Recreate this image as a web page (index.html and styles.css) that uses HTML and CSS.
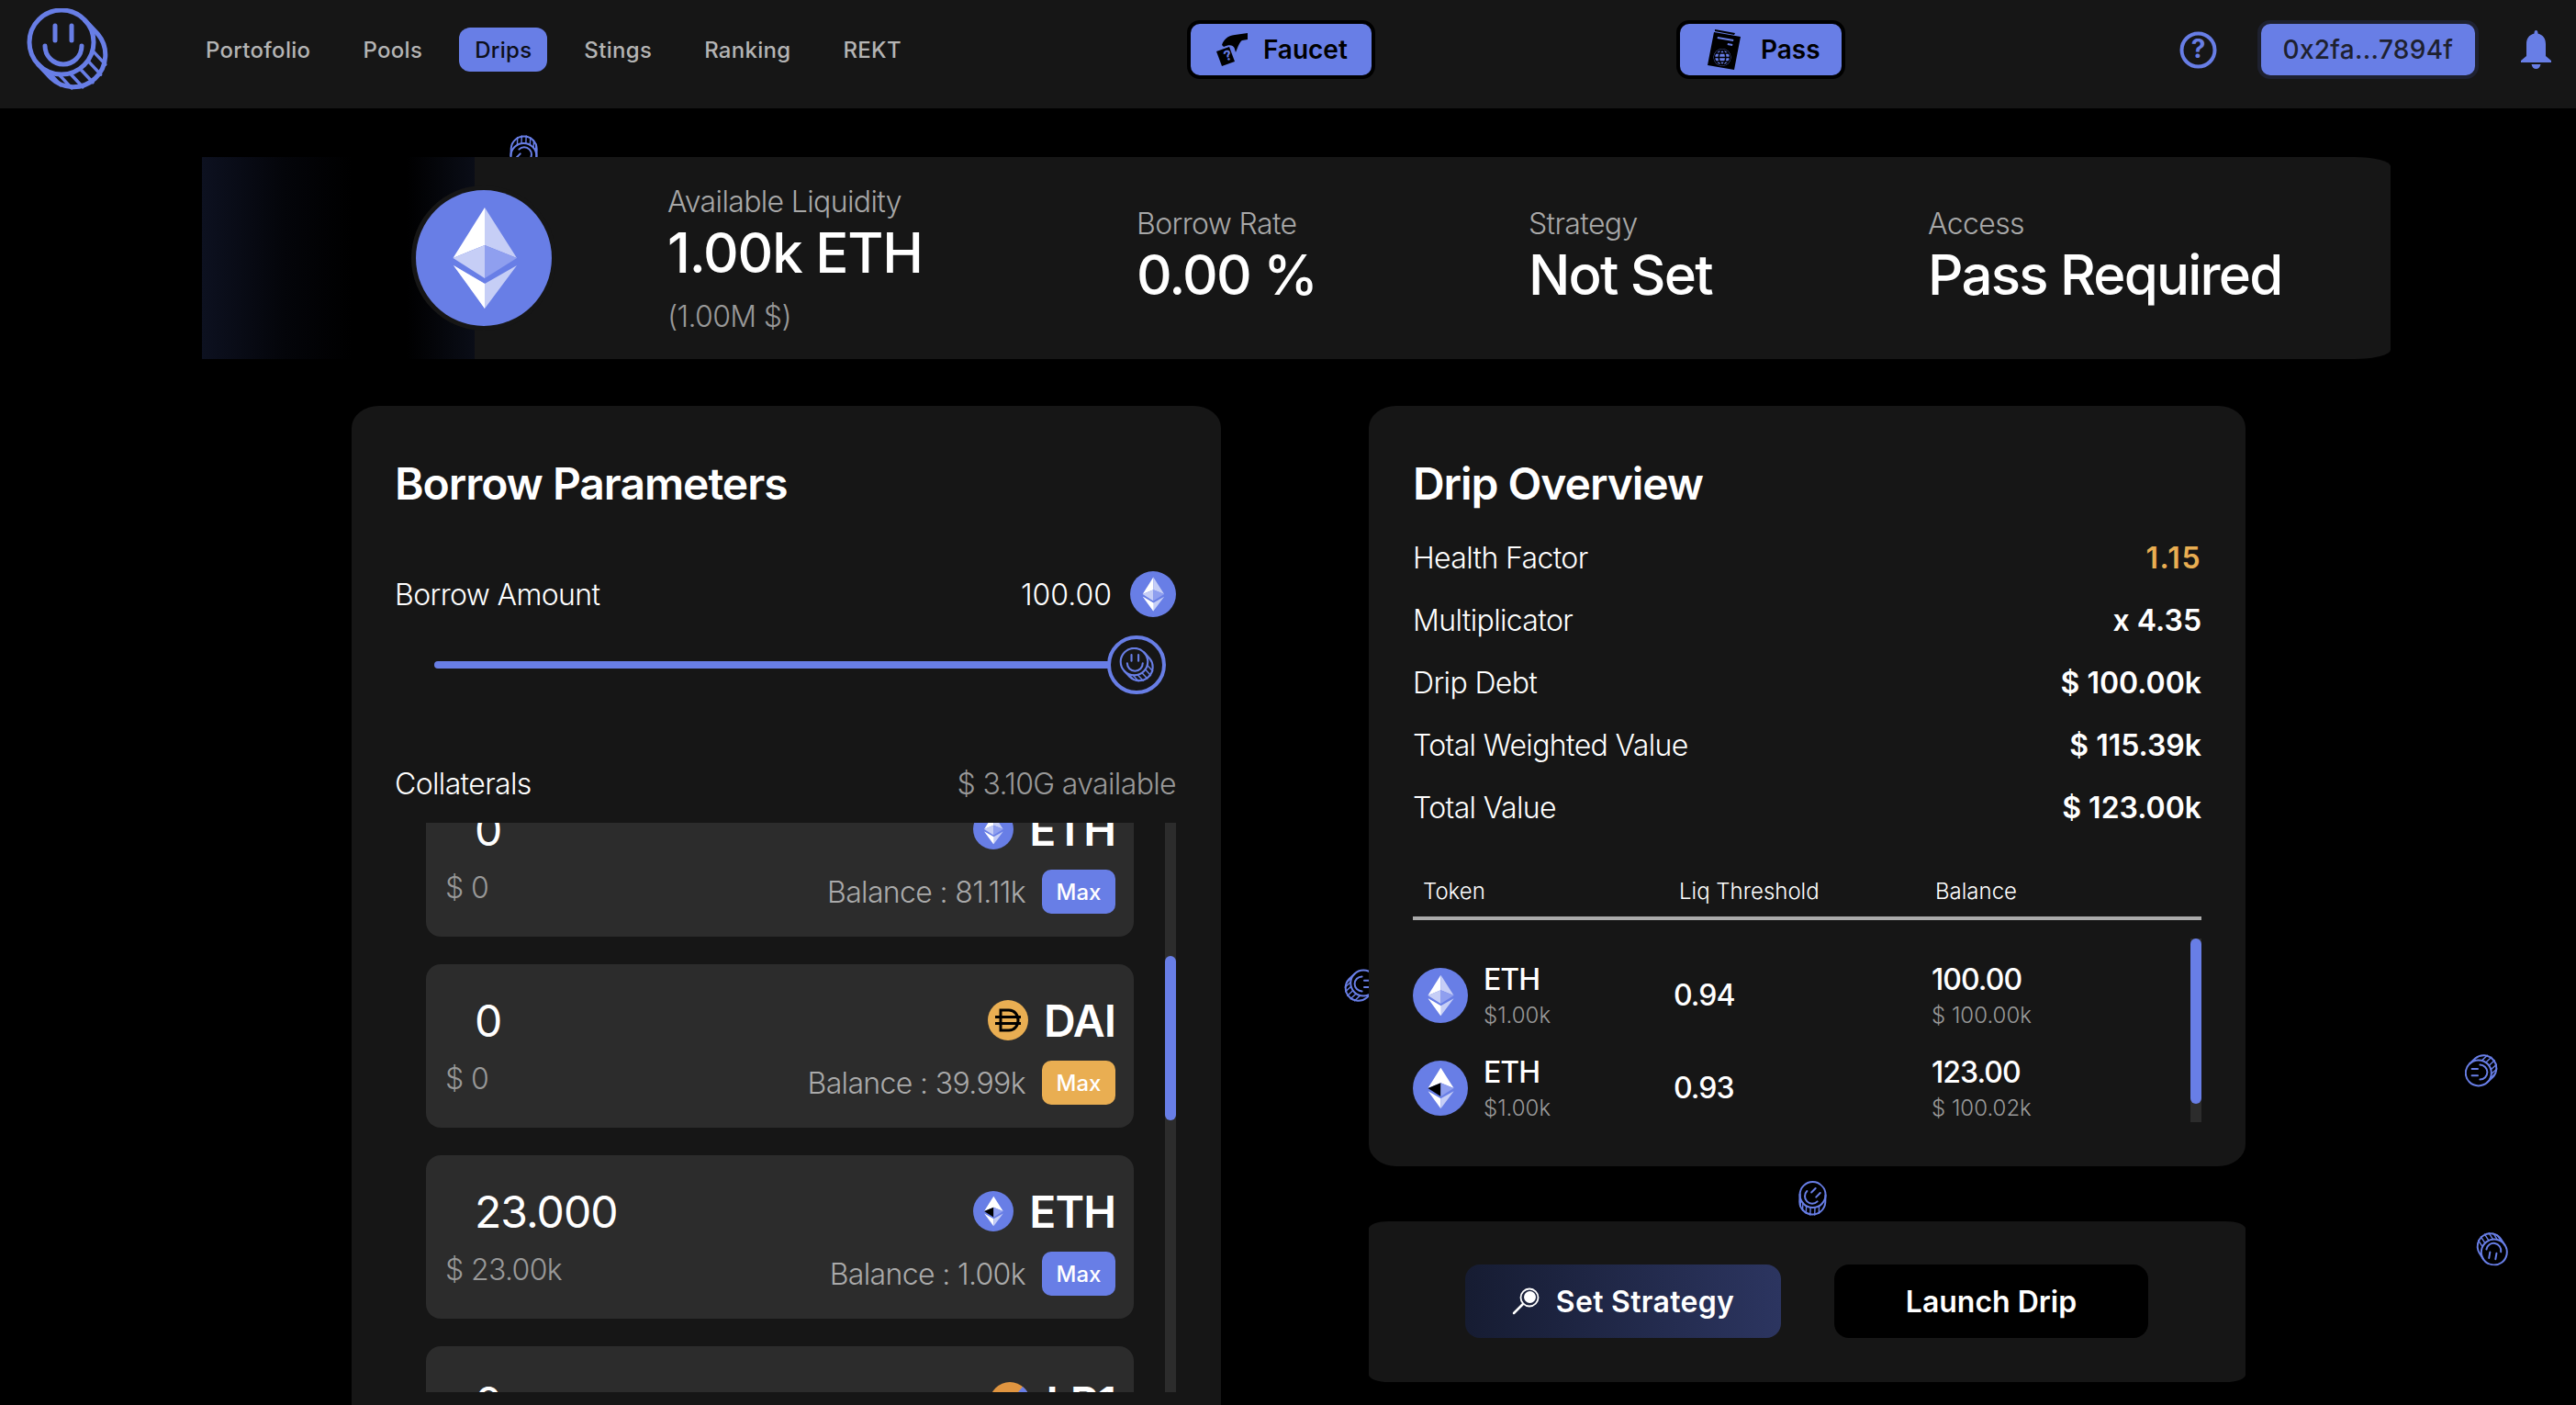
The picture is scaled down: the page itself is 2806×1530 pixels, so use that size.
FILE: index.html
```html
<!DOCTYPE html>
<html lang="en">
<head>
<meta charset="UTF-8">
<title>Drips</title>
<link rel="stylesheet" href="styles.css">
</head>
<body>

<svg class="defs" width="0" height="0">
  <symbol id="coin" viewBox="0 0 90 90">
    <g fill="none" stroke="currentColor" stroke-width="5" stroke-linecap="round">
      <circle cx="39" cy="37" r="35"/>
      <path d="M64.6 13.2L78.6 28.2A35 35 0 0 1 27.4 75.8L13.4 60.8"/>
      <path d="M32 19V35M50 19V35M21 41A20 20 0 0 0 61 41"/>
      <path stroke-width="3.5" d="M72.8 46.1L86.8 61.1M67.7 57.1L81.7 72.1M59.1 65.7L73.1 80.7M48.1 70.8L62.1 85.8M36 71.9L50 86.9M24.2 68.7L38.2 83.7"/>
    </g>
  </symbol>
  <symbol id="eth" viewBox="0 0 148 148">
    <circle cx="74" cy="74" r="74" fill="#687ee6"/>
    <path fill="#fff" d="M75 19L40.500 74L75 60Z"/>
    <path fill="#c6cef6" d="M75 19L110 74L75 60ZM40.500 74L75 60V96ZM41 82L75 129V102ZM110 82L75 129V102Z"/>
    <path fill="#8f9fef" d="M110 74L75 60V96Z"/>
    <path fill="#fff" d="M41 82L75 129V102Z"/>
  </symbol>
  <symbol id="eth-dark" viewBox="0 0 148 148">
    <circle cx="74" cy="74" r="74" fill="#687ee6"/>
    <path fill="#fff" d="M75 19L40.500 74L75 60ZM75 19L110 74L75 60Z"/>
    <path fill="#000" d="M40.500 74L75 60V96Z"/>
    <path fill="#8f9fef" d="M110 74L75 60V96Z"/>
    <path fill="#fff" d="M41 82L75 129V102Z"/>
    <path fill="#c6cef6" d="M110 82L75 129V102Z"/>
  </symbol>
</svg>

<svg class="coin coin-a"><use href="#coin"/></svg>
<svg class="coin coin-b"><use href="#coin"/></svg>
<svg class="coin coin-c"><use href="#coin"/></svg>
<svg class="coin coin-d"><use href="#coin"/></svg>
<svg class="coin coin-e"><use href="#coin"/></svg>

<header class="topbar">
  <svg class="logo"><use href="#coin"/></svg>
  <nav class="links">
    <a>Portofolio</a>
    <a>Pools</a>
    <a class="active">Drips</a>
    <a>Stings</a>
    <a>Ranking</a>
    <a>REKT</a>
  </nav>
  <button class="top-btn faucet">
    <svg width="34" height="36" viewBox="0 0 34 36">
      <path d="M34 0V7L28 8C25 10 24 14 21 21L19.500 16C18 13 14 12 8 15L6 13C8 7 12 3 20 2Z"/>
      <path d="M0 20L14 15L20 31L6 36Z"/>
      <text class="ticket-mark" x="9" y="31" transform="rotate(-20 9 27)">?</text>
    </svg>
    Faucet
  </button>
  <button class="top-btn pass">
    <svg width="36" height="44" viewBox="0 0 36 44">
      <path d="M8 0L30 4L29 6L8 2Z"/>
      <path fill-rule="evenodd" d="M7 3L36 8L29 44L0 39ZM11 8L10.6 10L28 13L28.4 11ZM22 15L21.6 17L27 18L27.4 16ZM16 21A9.500 9.500 0 1 0 16 40A9.500 9.500 0 1 0 16 21Z"/>
      <path fill="none" stroke="#000" stroke-width="1.500" d="M16 22A8.500 8.500 0 1 0 16 39A8.500 8.500 0 1 0 16 22ZM16 22C11 27 11 34 16 39C21 34 21 27 16 22ZM7.500 30.500H24.500M9 26H23M9 35H23"/>
    </svg>
    Pass
  </button>
  <svg class="help" width="41" height="41" viewBox="0 0 41 41">
    <circle cx="20.500" cy="20.500" r="18" fill="none" stroke="#687ee6" stroke-width="4"/>
    <text x="20.500" y="29" text-anchor="middle">?</text>
  </svg>
  <button class="wallet">0x2fa...7894f</button>
  <svg class="bell" width="33" height="42" viewBox="0 0 33 42">
    <path fill="#687ee6" d="M16.500 0C18 0 18.500 1.500 18.500 3.500C24.500 5 27 9.500 27 15V28L33 33V35H0V33L6 28V15C6 9.500 8.500 5 14.500 3.500C14.500 1.500 15 0 16.500 0ZM11.500 37H21.500C21 40 19 42 16.500 42C14 42 12 40 11.500 37Z"/>
  </svg>
</header>

<section class="hero">
  <div class="hero-coin"><svg><use href="#eth"/></svg></div>
  <div class="stat stat-main">
    <div class="stat-label">Available Liquidity</div>
    <div class="stat-value">1.00k ETH</div>
    <div class="stat-sub">(1.00M $)</div>
  </div>
  <div class="stat">
    <div class="stat-label">Borrow Rate</div>
    <div class="stat-value">0.00 %</div>
  </div>
  <div class="stat">
    <div class="stat-label">Strategy</div>
    <div class="stat-value">Not Set</div>
  </div>
  <div class="stat">
    <div class="stat-label">Access</div>
    <div class="stat-value">Pass Required</div>
  </div>
</section>

<main class="columns">
  <section class="card borrow">
    <h2>Borrow Parameters</h2>
    <div class="amount-row">
      <span class="tight">Borrow Amount</span>
      <span class="amount"><span>100.00</span><svg class="amount-eth"><use href="#eth"/></svg></span>
    </div>
    <div class="slider">
      <div class="track"></div>
      <div class="thumb"><svg><use href="#coin"/></svg></div>
    </div>
    <div class="collat-head">
      <span class="tight">Collaterals</span>
      <span class="tight muted">$ 3.10G available</span>
    </div>
    <div class="collat-list">
      <div class="collat-items">
        <div class="collat">
          <div class="collat-top">
            <span class="collat-val">0</span>
            <span class="collat-token"><svg><use href="#eth"/></svg>ETH</span>
          </div>
          <div class="collat-bottom">
            <span class="collat-usd">$ 0</span>
            <span class="collat-bal">Balance : 81.11k</span>
            <button class="max">Max</button>
          </div>
        </div>
        <div class="collat">
          <div class="collat-top">
            <span class="collat-val">0</span>
            <span class="collat-token">
              <svg viewBox="0 0 44 44">
                <circle cx="22" cy="22" r="22" fill="#e9ae52"/>
                <path fill="none" stroke="#000" stroke-width="3" d="M14 11H23C29 11 33 16 33 22C33 28 29 33 23 33H14ZM8 18.500H36M8 25.500H36"/>
              </svg>DAI
            </span>
          </div>
          <div class="collat-bottom">
            <span class="collat-usd">$ 0</span>
            <span class="collat-bal">Balance : 39.99k</span>
            <button class="max max-orange">Max</button>
          </div>
        </div>
        <div class="collat">
          <div class="collat-top">
            <span class="collat-val">23.000</span>
            <span class="collat-token"><svg><use href="#eth-dark"/></svg>ETH</span>
          </div>
          <div class="collat-bottom">
            <span class="collat-usd">$ 23.00k</span>
            <span class="collat-bal">Balance : 1.00k</span>
            <button class="max">Max</button>
          </div>
        </div>
        <div class="collat">
          <div class="collat-top">
            <span class="collat-val">0</span>
            <span class="collat-token">
              <svg viewBox="0 0 44 44">
                <circle cx="22" cy="22" r="22" fill="#e09540"/>
                <path fill="#687ee6" d="M22 22L44 22A22 22 0 0 0 36 5Z"/>
              </svg>LP1
            </span>
          </div>
        </div>
      </div>
      <div class="scroll collat-scroll"><div class="scroll-thumb"></div></div>
    </div>
  </section>

  <div class="right-col">
    <section class="card overview">
      <h2>Drip Overview</h2>
      <div class="facts">
        <div class="fact"><span class="tight">Health Factor</span><b class="orange">1.15</b></div>
        <div class="fact"><span class="tight">Multiplicator</span><b>x 4.35</b></div>
        <div class="fact"><span class="tight">Drip Debt</span><b>$ 100.00k</b></div>
        <div class="fact"><span class="tight">Total Weighted Value</span><b>$ 115.39k</b></div>
        <div class="fact"><span class="tight">Total Value</span><b>$ 123.00k</b></div>
      </div>
      <div class="table-head">
        <span>Token</span>
        <span>Liq Threshold</span>
        <span>Balance</span>
      </div>
      <div class="table-body">
        <div class="table-rows">
          <div class="table-row">
            <div class="token"><svg><use href="#eth"/></svg>
              <div class="two-line"><b>ETH</b><small>$1.00k</small></div>
            </div>
            <b>0.94</b>
            <div class="two-line"><b>100.00</b><small>$ 100.00k</small></div>
          </div>
          <div class="table-row">
            <div class="token"><svg><use href="#eth-dark"/></svg>
              <div class="two-line"><b>ETH</b><small>$1.00k</small></div>
            </div>
            <b>0.93</b>
            <div class="two-line"><b>123.00</b><small>$ 100.02k</small></div>
          </div>
        </div>
        <div class="scroll table-scroll"><div class="scroll-thumb"></div></div>
      </div>
    </section>

    <section class="card actions">
      <button class="action strategy">
        <svg width="30" height="30" viewBox="0 0 30 30">
          <circle cx="19" cy="11" r="9.500" fill="none" stroke="#fff" stroke-width="1.800"/>
          <circle cx="19.500" cy="10.500" r="6.500" fill="#fff"/>
          <path stroke="#fff" stroke-width="2.500" stroke-linecap="round" d="M12 18L2 28"/>
        </svg>
        Set Strategy
      </button>
      <button class="action launch">Launch Drip</button>
    </section>
  </div>
</main>

</body>
</html>
```

FILE: styles.css
```css
* {
  box-sizing: border-box;
}
html, body {
  height: 100%;
}
body {
  margin: 0;
  background: #000;
  color: #fff;
  font-family: Inter, "Noto Sans", sans-serif;
  overflow: hidden;
  position: relative;
}
button {
  font-family: inherit;
  cursor: pointer;
}
.defs {
  position: absolute;
}
.tight {
  letter-spacing: -0.02em;
}

/* top bar */
.topbar {
  height: 118px;
  background: #161616;
  display: flex;
  align-items: center;
  padding: 0 0 10px 28px;
}
.logo {
  width: 90px;
  height: 90px;
  color: #687ee6;
  flex: none;
}
.links {
  display: flex;
  gap: 23px;
  margin-left: 89px;
  font-size: 24px;
  font-weight: 500;
  letter-spacing: 0.3px;
  color: #b4b4b4;
}
.links a {
  padding: 0 17px;
  height: 48px;
  line-height: 50px;
  border-radius: 12px;
}
.links a.active {
  background: #687ee6;
  color: #0d0f1a;
}
.top-btn {
  height: 64px;
  border: 4px solid #000;
  border-radius: 14px;
  background: #687ee6;
  color: #000;
  font-size: 28px;
  font-weight: 600;
  display: flex;
  align-items: center;
  padding: 0;
}
.ticket-mark {
  font-size: 15px;
  font-weight: 700;
  fill: #687ee6;
}
.faucet {
  width: 205px;
  margin-left: 294px;
  padding-left: 28px;
  gap: 17px;
}
.pass {
  width: 184px;
  margin-left: 328px;
  padding-left: 30px;
  gap: 22px;
}
.help {
  margin-left: 364px;
  flex: none;
}
.help text {
  font-size: 28px;
  font-weight: 700;
  fill: #687ee6;
}
.wallet {
  width: 241px;
  height: 64px;
  margin-left: 44px;
  border: 4px solid #1e2130;
  border-radius: 14px;
  background: #687ee6;
  color: #1e2130;
  font-size: 28px;
  font-weight: 500;
  letter-spacing: 0.3px;
  padding: 0;
}
.bell {
  margin-left: 46px;
  flex: none;
}

/* hero strip */
.hero {
  position: relative;
  z-index: 1;
  margin: 53px 0 0 220px;
  width: 2384px;
  height: 220px;
  background: linear-gradient(90deg, #0d1120 0, #04050a 30%, #000 55%, #000 75%, #0a0d17 100%) 0 0 / 297px 100% no-repeat, #161616;
  border-radius: 0 40px 40px 0 / 0 10px 10px 0;
  display: grid;
  grid-template-columns: 507px 511px 427px 435px 1fr;
  align-items: center;
}
.hero-coin {
  width: 158px;
  height: 158px;
  margin-left: 228px;
  border-radius: 50%;
  background: #161616;
  padding: 5px;
}
.hero-coin svg {
  width: 148px;
  height: 148px;
  display: block;
}
.stat {
  padding-bottom: 4px;
}
.stat-main {
  padding: 3px 0 0;
}
.stat-label {
  font-size: 32px;
  font-weight: 300;
  line-height: 40px;
  letter-spacing: -0.02em;
  color: #a8a8a8;
}
.stat-value {
  font-size: 60px;
  font-weight: 500;
  line-height: 70px;
  letter-spacing: -0.03em;
}
.stat-main .stat-value {
  letter-spacing: -0.02em;
}
.stat-sub {
  font-size: 32px;
  font-weight: 300;
  line-height: 40px;
  letter-spacing: -0.02em;
  color: #999;
  margin-top: 15px;
}

/* two columns */
.columns {
  display: grid;
  grid-template-columns: 947px 955px;
  gap: 161px;
  margin: 51px 0 0 383px;
  position: relative;
  z-index: 1;
}
.card {
  background: #161616;
  border-radius: 30px / 24px;
}
.card h2 {
  margin: 0;
  font-size: 48px;
  font-weight: 600;
  line-height: 50px;
  letter-spacing: -0.022em;
}
.borrow {
  height: 1200px;
  padding: 60px 49px 0 47px;
}
.amount-row, .collat-head {
  display: flex;
  justify-content: space-between;
  align-items: center;
  font-size: 32px;
  font-weight: 300;
}
.amount-row {
  margin-top: 70px;
  height: 50px;
}
.amount {
  display: flex;
  align-items: center;
  gap: 20px;
}
.amount-eth {
  width: 50px;
  height: 50px;
}
.slider {
  position: relative;
  height: 64px;
  margin: 20px 11px 0 43px;
}
.track {
  position: absolute;
  left: 0;
  right: 50px;
  top: 28px;
  height: 8px;
  border-radius: 4px;
  background: #687ee6;
}
.thumb {
  position: absolute;
  right: 0;
  top: 0;
  width: 64px;
  height: 64px;
  border: 4px solid #687ee6;
  border-radius: 50%;
  background: #161616;
  color: #687ee6;
  padding: 9px;
}
.thumb svg {
  width: 100%;
  height: 100%;
  display: block;
}
.collat-head {
  margin-top: 77px;
  height: 40px;
}
.muted {
  color: #999;
}
.collat-list {
  display: flex;
  height: 620px;
  margin-top: 23px;
  overflow: hidden;
}
.collat-items {
  width: 771px;
  margin: -54px 0 0 34px;
  display: flex;
  flex-direction: column;
  gap: 30px;
}
.collat {
  flex: none;
  height: 178px;
  background: #2c2c2c;
  border-radius: 16px;
  padding: 36px 20px 0 21px;
}
.collat-top {
  display: flex;
  justify-content: space-between;
  align-items: center;
  height: 50px;
}
.collat-val {
  font-size: 48px;
  font-weight: 400;
  letter-spacing: -0.02em;
  margin-left: 32px;
}
.collat-token {
  display: flex;
  align-items: center;
  gap: 17px;
  font-size: 48px;
  font-weight: 600;
  letter-spacing: -0.02em;
}
.collat-token svg {
  width: 44px;
  height: 44px;
}
.collat-bottom {
  display: flex;
  align-items: center;
  height: 48px;
  margin-top: 19px;
}
.collat-usd {
  font-size: 32px;
  font-weight: 300;
  letter-spacing: -0.02em;
  color: #999;
  align-self: flex-start;
  line-height: 40px;
  margin-right: auto;
}
.collat-bal {
  font-size: 32px;
  font-weight: 300;
  letter-spacing: -0.02em;
  color: #aaa;
  margin-right: 18px;
}
.max {
  width: 80px;
  height: 48px;
  border: 0;
  border-radius: 10px;
  background: #687ee6;
  color: #fff;
  font-size: 24px;
  font-weight: 500;
  padding: 0;
}
.max-orange {
  background: #e9ae52;
}
.scroll {
  width: 12px;
  background: #2c2c2c;
  flex: none;
}
.scroll-thumb {
  background: #687ee6;
  border-radius: 6px;
}
.collat-scroll {
  margin-left: 34px;
}
.collat-scroll .scroll-thumb {
  margin-top: 145px;
  height: 179px;
}

/* overview card */
.right-col {
  display: flex;
  flex-direction: column;
  gap: 60px;
}
.overview {
  height: 828px;
  padding: 60px 48px 0;
}
.facts {
  margin-top: 21px;
}
.fact {
  display: flex;
  justify-content: space-between;
  align-items: center;
  height: 68px;
  font-size: 32px;
  font-weight: 300;
}
.fact b {
  font-weight: 600;
}
.orange {
  color: #e9ae52;
  letter-spacing: 1.5px;
}
.table-head {
  display: grid;
  grid-template-columns: 279px 279px 1fr;
  margin-top: 43px;
  padding: 0 0 12px 11px;
  height: 46px;
  border-bottom: 4px solid #aaa;
  font-size: 24px;
  font-weight: 300;
  line-height: 30px;
}
.table-body {
  display: flex;
  height: 200px;
  margin-top: 20px;
  overflow: hidden;
}
.table-rows {
  flex: 1;
  padding-top: 11px;
}
.table-row {
  display: grid;
  grid-template-columns: 284px 281px 1fr;
  align-items: center;
  height: 101px;
  font-size: 32px;
}
.table-row b {
  font-weight: 500;
  letter-spacing: -0.03em;
}
.token {
  display: flex;
  align-items: center;
  gap: 17px;
}
.token svg {
  width: 60px;
  height: 60px;
}
.two-line {
  display: flex;
  flex-direction: column;
  padding-top: 5px;
  line-height: 39px;
}
.two-line small {
  font-size: 24px;
  font-weight: 300;
  color: #999;
}
.table-scroll .scroll-thumb {
  height: 180px;
}

/* action buttons */
.actions {
  height: 175px;
  border-radius: 22px / 8px;
  padding: 47px 0 0 105px;
  display: flex;
  gap: 58px;
  align-items: flex-start;
}
.action {
  width: 344px;
  height: 80px;
  border: 0;
  border-radius: 16px;
  color: #fff;
  font-size: 32px;
  font-weight: 600;
  display: flex;
  align-items: center;
  justify-content: center;
  gap: 18px;
  padding: 0;
}
.strategy {
  background: linear-gradient(90deg, #161c32, #2c3560);
  letter-spacing: 0.3px;
}
.launch {
  width: 342px;
  background: #000;
}

/* little coins floating behind the cards */
.coin {
  position: absolute;
  width: 36px;
  height: 36px;
  color: #687ee6;
}
.coin-a {
  left: 553px;
  top: 148px;
  transform: rotate(-135deg);
}
.coin-b {
  left: 1464px;
  top: 1055px;
  transform: rotate(90deg);
}
.coin-c {
  left: 1956px;
  top: 1287px;
  transform: rotate(45deg);
}
.coin-d {
  left: 2685px;
  top: 1148px;
  transform: rotate(-90deg);
}
.coin-e {
  left: 2697px;
  top: 1342px;
  transform: rotate(-170deg);
}
```
